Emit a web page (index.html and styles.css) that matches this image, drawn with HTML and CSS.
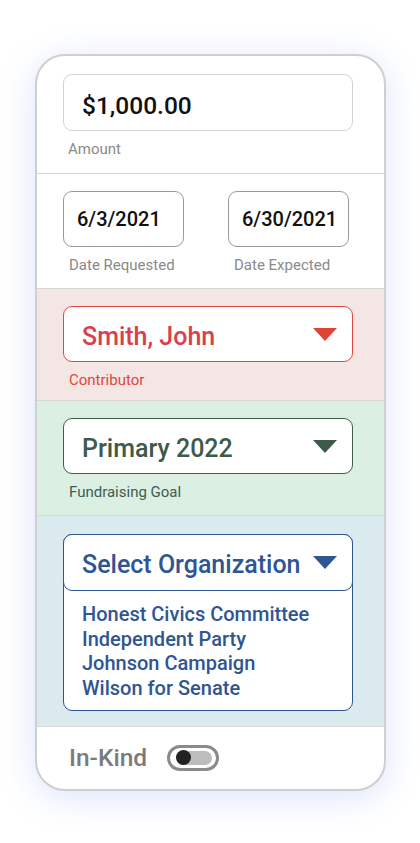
FILE: index.html
```html
<!DOCTYPE html>
<html>
<head>
<meta charset="utf-8">
<link rel="stylesheet" href="styles.css">
</head>
<body>
<div class="card">
  <section class="sec sec-amount">
    <div class="field field-amount">$1,000.00</div>
    <div class="label">Amount</div>
  </section>
  <section class="sec sec-dates">
    <div class="date-col">
      <div class="field field-date">6/3/2021</div>
      <div class="label">Date Requested</div>
    </div>
    <div class="date-col">
      <div class="field field-date">6/30/2021</div>
      <div class="label">Date Expected</div>
    </div>
  </section>
  <section class="sec sec-contrib">
    <div class="field select">
      <span>Smith, John</span>
      <span class="tri"></span>
    </div>
    <div class="label">Contributor</div>
  </section>
  <section class="sec sec-goal">
    <div class="field select">
      <span>Primary 2022</span>
      <span class="tri"></span>
    </div>
    <div class="label">Fundraising Goal</div>
  </section>
  <section class="sec sec-org">
    <div class="org-box">
      <div class="field select org-head">
        <span>Select Organization</span>
        <span class="tri"></span>
      </div>
      <ul class="org-list">
        <li>Honest Civics Committee</li>
        <li>Independent Party</li>
        <li>Johnson Campaign</li>
        <li>Wilson for Senate</li>
      </ul>
    </div>
  </section>
  <section class="sec sec-kind">
    <span class="kind-label">In-Kind</span>
    <span class="toggle"><span class="track"><span class="knob"></span></span></span>
  </section>
</div>
</body>
</html>
```

FILE: styles.css
```css
* { box-sizing: border-box; }
html, body { margin: 0; padding: 0; background: #ffffff; }
body {
  font-family: Roboto, "Liberation Sans", sans-serif;
  width: 420px;
  height: 843px;
  overflow: hidden;
}
.card {
  margin: 54px 0 0 35px;
  width: 351px;
  height: 737px;
  border: 2px solid #cfcfcf;
  border-radius: 30px;
  background: #ffffff;
  overflow: hidden;
  box-shadow: 0 6px 34px rgba(90, 130, 245, 0.22);
}
.sec {
  border-bottom: 1px solid #d6d6d6;
  padding-left: 26px;
}
.field {
  background: #ffffff;
  border-radius: 9px;
  display: flex;
  align-items: center;
}
.label {
  font-size: 15px;
  line-height: 18px;
  margin-top: 9px;
  padding-left: 6px;
  color: #8a8a8a;
}
.sec-amount { padding-top: 18px; padding-bottom: 15px; }
.field-amount {
  width: 290px;
  height: 57px;
  border: 1px solid #d2d2d2;
  padding: 5px 0 0 18px;
  font-size: 24.5px;
  font-weight: 500;
  color: #111111;
}
.sec-amount .label { padding-left: 5px; }
.sec-dates {
  display: flex;
  gap: 44px;
  padding-top: 17px;
  padding-bottom: 14px;
}
.field-date {
  width: 121px;
  height: 56px;
  border: 1px solid #9a9a9a;
  padding-left: 13px;
  font-size: 20px;
  font-weight: 500;
  color: #111111;
}
.select {
  width: 290px;
  height: 56px;
  border: 1px solid;
  padding: 4px 15px 0 18px;
  justify-content: space-between;
  font-size: 25px;
  font-weight: 500;
}
.tri {
  width: 0;
  height: 0;
  margin-top: -4px;
  border-left: 12px solid transparent;
  border-right: 12px solid transparent;
  border-top: 13px solid currentColor;
}
.sec-contrib {
  background: #f5e6e6;
  padding-top: 17px;
  padding-bottom: 11px;
}
.sec-contrib .select { border-color: #e2473c; color: #d9404e; }
.sec-contrib .tri { color: #de4333; }
.sec-contrib .label { color: #e0463b; }
.sec-goal {
  background: #dbf0e3;
  padding-top: 17px;
  padding-bottom: 14px;
}
.sec-goal .select { border-color: #3f5d4d; color: #3d5a4a; }
.sec-goal .label { color: #3f5d4d; }
.sec-org {
  background: #daeaee;
  padding-top: 18px;
  padding-bottom: 15px;
}
.org-box {
  width: 290px;
  height: 177px;
  border: 1px solid #2f5592;
  border-radius: 9px;
  background: #ffffff;
  color: #2f5592;
}
.org-head {
  width: 290px;
  height: 57px;
  margin: -1px 0 0 -1px;
  border-color: #2f5592;
  color: #2f5592;
}
.org-list {
  list-style: none;
  margin: 0;
  padding: 11px 0 0 18px;
  font-size: 20px;
  font-weight: 500;
  line-height: 24.5px;
}
.sec-kind {
  border-bottom: none;
  display: flex;
  align-items: center;
  height: 61px;
  padding-left: 32px;
  gap: 20px;
}
.kind-label {
  font-size: 24.5px;
  font-weight: 500;
  color: #7b7b7b;
}
.toggle {
  width: 52px;
  height: 26px;
  border: 3px solid #8a8a8a;
  border-radius: 13px;
  display: flex;
  align-items: center;
  padding-left: 6px;
}
.track {
  width: 36px;
  height: 14px;
  background: #bdbdbd;
  border-radius: 7px;
  display: flex;
  align-items: center;
}
.knob {
  width: 15px;
  height: 15px;
  border-radius: 50%;
  background: #222222;
}
```
